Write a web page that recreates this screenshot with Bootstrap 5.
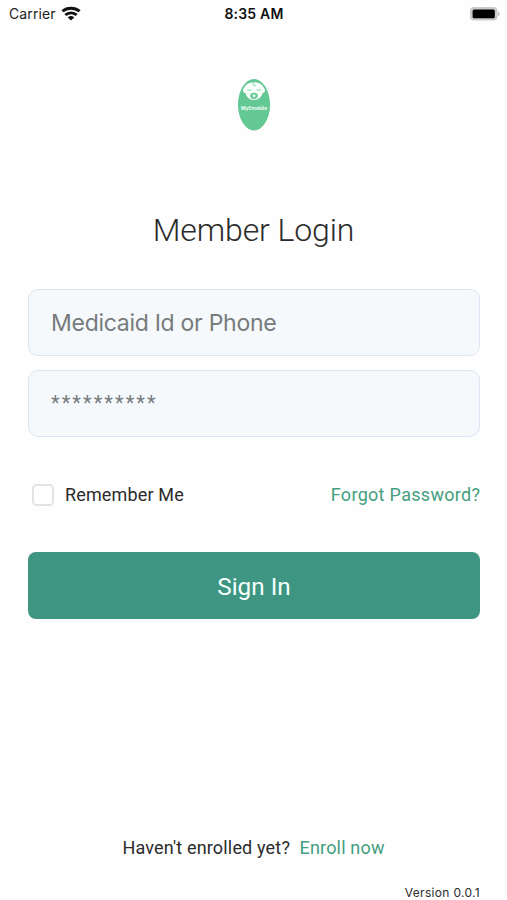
<!DOCTYPE html>
<html lang="en">
<head>
<meta charset="utf-8">
<meta name="viewport" content="width=device-width, initial-scale=1">
<title>Member Login</title>
<link href="https://cdn.jsdelivr.net/npm/bootstrap@5.3.0/dist/css/bootstrap.min.css" rel="stylesheet">
<style>
body{font-family:Roboto,"Liberation Sans",sans-serif;color:#2b2b2b;background:#fefefe}
.screen{height:900px;overflow:hidden}
.ios{font-family:Inter,"Liberation Sans",sans-serif}
.status-bar{display:grid;grid-template-columns:1fr auto 1fr;height:28px;padding:0 7px 0 9px;font-size:14px;letter-spacing:.12px;line-height:28px;color:#1c1c1c}
.status-time{margin-right:1px;font-size:14px;letter-spacing:.2px;font-weight:600;color:#111}
.logo{margin-top:50px;height:54px}
.title{margin:74px 0 0;font-size:32px;letter-spacing:-.12px;line-height:48px;font-weight:300;color:#2b2b2b}
.login-form{margin-top:35px;padding:0 27px 0 28px}
.field{height:67px;padding:1px 22px 0;border:1px solid #dde5f2;border-radius:10px;background:#f5f9fc;font-size:23px;letter-spacing:-.28px}
.field:focus{background:#f5f9fc}
.field::placeholder{color:#777b7c;opacity:1}
.field-secret{margin-top:14px;padding-bottom:3px;font-size:20px;letter-spacing:2.05px}
.options{margin-top:46px;height:24px;font-size:18px;line-height:24px;letter-spacing:.15px}
.check{width:22px;height:22px;margin:0 11px 0 4px!important;border:2px solid #e2e3e5;border-radius:3px}
.accent,.accent:hover{color:#449f80;text-decoration:none}
.forgot{letter-spacing:.3px;margin-right:-.3px}
.submit{margin-top:45px;height:67px;padding-top:9px;border:0;border-radius:8px;background:#3d9582!important;font-size:24.3px;color:#f5fffc!important}
.enroll{margin-bottom:23px;gap:9.5px;font-size:18px;letter-spacing:.17px;line-height:24px}
.version{padding:0 27px 0 0;font-size:12px;letter-spacing:.32px;line-height:20px;margin-bottom:-3px}
</style>
</head>
<body>
<main class="screen d-flex flex-column">
  <header class="status-bar ios">
    <div class="d-flex align-items-center"><span>Carrier</span>
      <svg class="ms-1" width="22" height="16" viewBox="0 0 20 16" preserveAspectRatio="none" fill="none" stroke="#111" stroke-width="2.8"><path d="M2.200 5.300a11.500 11.500 0 0 1 15.600 0M4.900 8.900a7.200 7.200 0 0 1 10.200 0"/><path d="M7 11.500a4.300 4.300 0 0 1 6 0l-3 3z" fill="#111" stroke="none"/></svg>
    </div>
    <div class="status-time">8:35 AM</div>
    <div class="d-flex align-items-center justify-content-end">
      <svg width="31" height="16" viewBox="0 0 31 16"><rect x="1" y="1" width="27.500" height="13.500" rx="4" fill="#c9c9c9"/><rect x="3.600" y="3.500" width="22.200" height="8.700" rx="1.500" fill="#000"/><path d="M29.200 5.400q2.800 2.400 0 4.800z" fill="#aaa"/></svg>
    </div>
  </header>
  <div class="logo d-flex justify-content-center">
    <svg width="34" height="54" viewBox="0 0 34 54"><ellipse cx="17" cy="26.700" rx="16" ry="25.700" fill="#63c893"/>
      <path d="M6.800 10.500C8.500 6.500 12 4.300 17 4.300s8.500 2.200 10.200 6.200q1.500.8.600 3-.6 1.700-2.300 1.500C24.500 19 21.500 22 17 22S9.500 19 8.500 15q-1.700.2-2.300-1.500-.9-2.200.6-3z" fill="#fafffc"/>
      <path d="M17 4q-2.500 1.800 0 3.600 1.300.7 2-.4" fill="none" stroke="#63c893" stroke-width=".8"/>
      <path d="M10.300 11.800q2 1 4 0M19.700 11.800q2 1 4 0" fill="none" stroke="#63c893" stroke-width=".9"/>
      <ellipse cx="17" cy="17.800" rx="3.800" ry="3.100" fill="#63c893"/><circle cx="17" cy="17.800" r="1.500" fill="#e7fff1"/>
      <text x="17" y="32" text-anchor="middle" font-family="Inter,sans-serif" font-size="4.600" font-weight="700" fill="#effff5" textLength="26" lengthAdjust="spacingAndGlyphs">MyEmobile</text>
    </svg>
  </div>
  <h1 class="title text-center">Member Login</h1>
  <form class="login-form">
    <input class="form-control field ios" type="text" placeholder="Medicaid Id or Phone" aria-label="Medicaid Id or Phone">
    <input class="form-control field field-secret" type="text" placeholder="**********" aria-label="Password">
    <div class="options d-flex align-items-center justify-content-between">
      <label class="d-flex align-items-center"><input class="form-check-input check" type="checkbox"><span>Remember Me</span></label>
      <a class="accent forgot" href="#">Forgot Password?</a>
    </div>
    <button class="btn submit w-100" type="button">Sign In</button>
  </form>
  <footer class="mt-auto">
    <div class="enroll d-flex justify-content-center"><span>Haven't enrolled yet?</span><a class="accent" href="#">Enroll now</a></div>
    <div class="version ios text-end">Version 0.0.1</div>
  </footer>
</main>
<script src="https://cdn.jsdelivr.net/npm/bootstrap@5.3.0/dist/js/bootstrap.bundle.min.js"></script>
</body>
</html>
